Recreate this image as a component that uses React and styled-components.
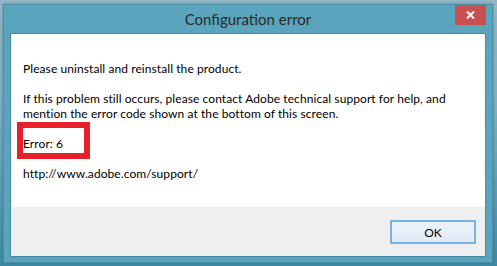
import React from "react";
import styled, { createGlobalStyle } from "styled-components";

const GlobalStyle = createGlobalStyle`
  html, body { margin: 0; padding: 0; }
  body {
    width: 497px;
    height: 266px;
    overflow: hidden;
    background: linear-gradient(180deg, #93b7c7 0%, #7fb0c3 40%, #3d8aa5 100%);
    font-family: Lato, "Liberation Sans", sans-serif;
  }
`;

const Desktop = styled.div`
  width: 497px;
  height: 266px;
  box-sizing: border-box;
  padding: 4px 4px 3px 3px;
  display: flex;
`;

const Window = styled.div`
  flex: 1;
  display: flex;
  flex-direction: column;
  border: 1px solid #4b8fa6;
  background: #5aa5bd;
  box-shadow: 0 0 3px rgba(40, 90, 110, 0.5);
`;

const TitleBar = styled.div`
  height: 28px;
  display: grid;
  grid-template-columns: 1fr auto 1fr;
  align-items: center;
`;

const Title = styled.div`
  grid-column: 2;
  font-family: Lato, "Liberation Sans", sans-serif;
  font-size: 15px;
  color: #2a2a2a;
  margin-top: -1px;
`;

const CloseButton = styled.div`
  grid-column: 3;
  justify-self: end;
  align-self: start;
  width: 31px;
  height: 20px;
  margin-right: 6px;
  background: #c75050;
  display: flex;
  align-items: center;
  justify-content: center;
`;

const Client = styled.div`
  flex: 1;
  margin: 0 6px 5px 6px;
  border: 1px solid #4a8aa1;
  display: flex;
  flex-direction: column;
`;

const Body = styled.div`
  flex: 1;
  background: #ffffff;
  padding: 27px 12px 0 12px;
  font-family: Lato, "Liberation Sans", sans-serif;
  font-size: 12px;
  letter-spacing: 0.08px;
  line-height: 15px;
  color: #000;
`;

const Para = styled.p`
  margin: 0 0 15px 0;
  position: relative;
`;

const Highlight = styled.span`
  position: absolute;
  left: -6px;
  top: -14px;
  width: 61px;
  height: 25px;
  border: 6px solid #e8202a;
  pointer-events: none;
`;

const Footer = styled.div`
  height: 49px;
  background: #efefef;
  display: flex;
  justify-content: flex-end;
  align-items: flex-start;
  padding: 13px 9px 0 0;
  box-sizing: border-box;
`;

const OkButton = styled.button`
  width: 86px;
  height: 24px;
  box-sizing: border-box;
  border: 2px solid #74b2ee;
  background: linear-gradient(180deg, #eef3fa 0%, #e3eaf5 100%);
  font-family: Lato, "Liberation Sans", sans-serif;
  font-size: 12px;
  color: #000;
  padding: 0;
`;

export default function App() {
  return (
    <>
      <GlobalStyle />
      <Desktop>
        <Window>
          <TitleBar>
            <Title>Configuration error</Title>
            <CloseButton>
              <svg width="9" height="8" viewBox="0 0 9 8">
                <path d="M1 0.5 L8 7.5 M8 0.5 L1 7.5" stroke="#fff" strokeWidth="2" />
              </svg>
            </CloseButton>
          </TitleBar>
          <Client>
            <Body>
              <Para>Please uninstall and reinstall the product.</Para>
              <Para>
                If this problem still occurs, please contact Adobe technical support for help, and
                <br />
                mention the error code shown at the bottom of this screen.
              </Para>
              <Para>
                Error: 6
                <Highlight />
              </Para>
              <Para>http://www.adobe.com/support/</Para>
            </Body>
            <Footer>
              <OkButton>OK</OkButton>
            </Footer>
          </Client>
        </Window>
      </Desktop>
    </>
  );
}
